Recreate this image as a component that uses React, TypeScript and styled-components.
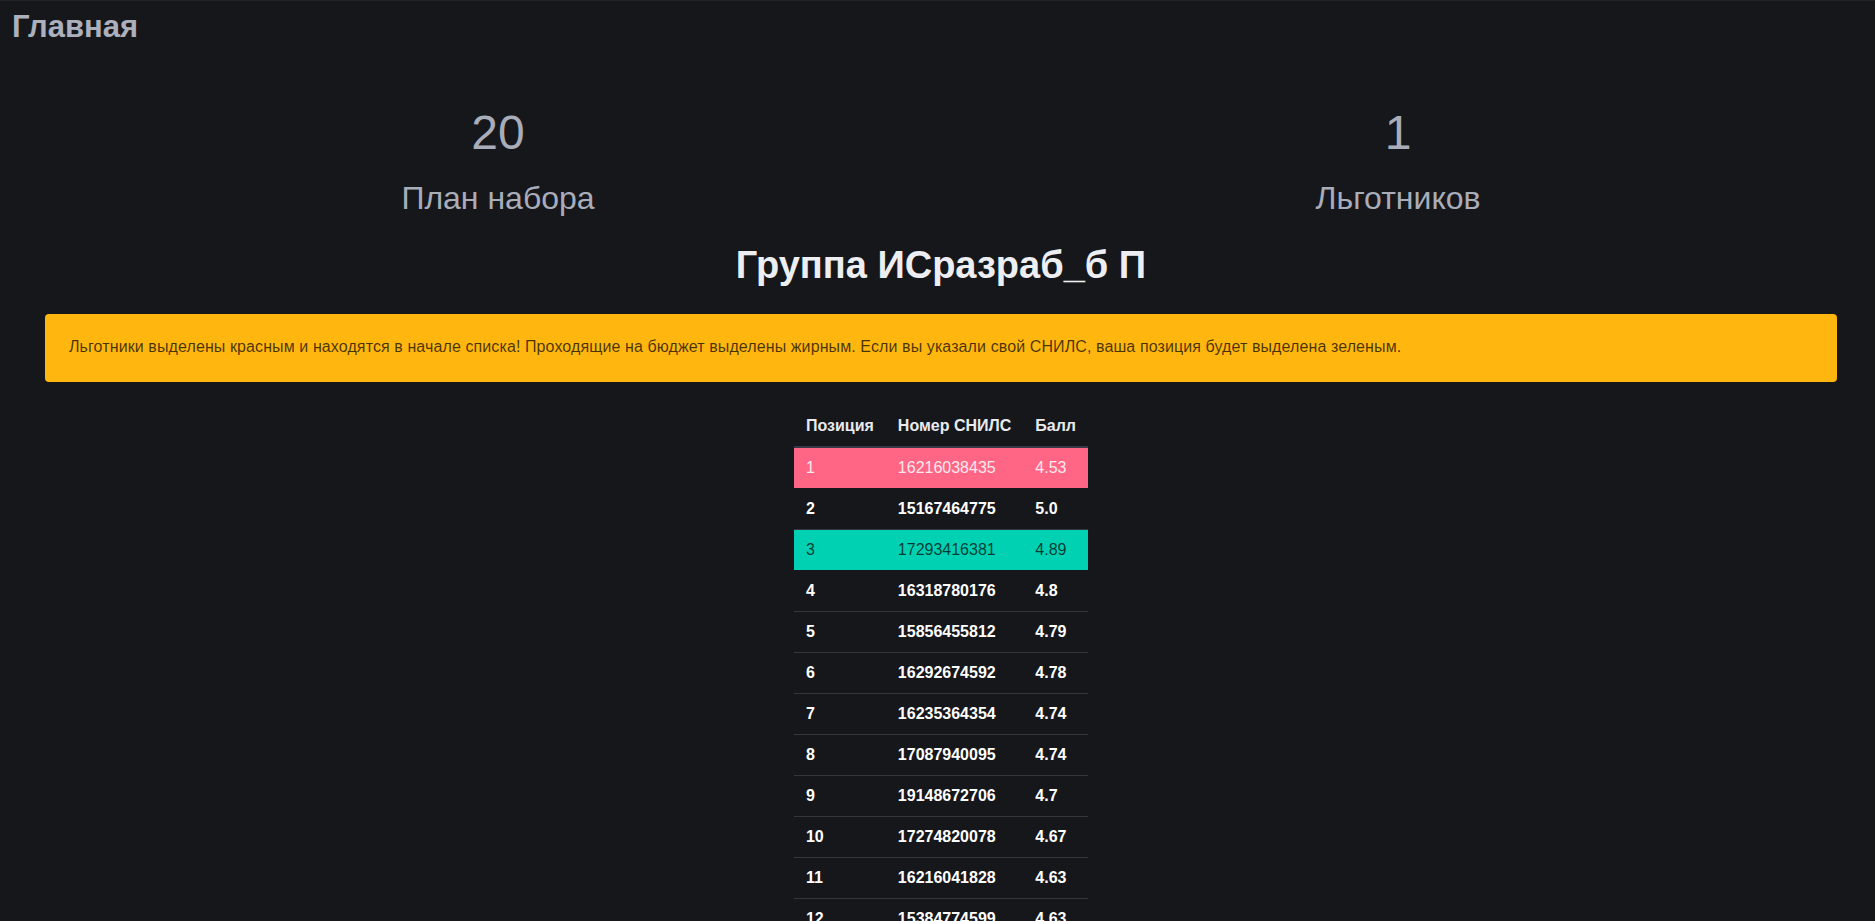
import styled, { createGlobalStyle } from 'styled-components'

type Kind = 'benefit' | 'mine' | 'pass'

interface Row {
  pos: number
  snils: string
  score: string
  kind: Kind
}

const rows: Row[] = [
  { pos: 1, snils: '16216038435', score: '4.53', kind: 'benefit' },
  { pos: 2, snils: '15167464775', score: '5.0', kind: 'pass' },
  { pos: 3, snils: '17293416381', score: '4.89', kind: 'mine' },
  { pos: 4, snils: '16318780176', score: '4.8', kind: 'pass' },
  { pos: 5, snils: '15856455812', score: '4.79', kind: 'pass' },
  { pos: 6, snils: '16292674592', score: '4.78', kind: 'pass' },
  { pos: 7, snils: '16235364354', score: '4.74', kind: 'pass' },
  { pos: 8, snils: '17087940095', score: '4.74', kind: 'pass' },
  { pos: 9, snils: '19148672706', score: '4.7', kind: 'pass' },
  { pos: 10, snils: '17274820078', score: '4.67', kind: 'pass' },
  { pos: 11, snils: '16216041828', score: '4.63', kind: 'pass' },
  { pos: 12, snils: '15384774599', score: '4.63', kind: 'pass' },
]

export default function App() {
  return (
    <>
      <GlobalStyle />
      <Page>
        <Header>Главная</Header>
        <Content>
          <Stats>
            <Stat>
              <StatValue>20</StatValue>
              <StatLabel>План набора</StatLabel>
            </Stat>
            <Stat>
              <StatValue>1</StatValue>
              <StatLabel>Льготников</StatLabel>
            </Stat>
          </Stats>
          <GroupTitle>Группа ИСразраб_б П</GroupTitle>
          <Notice>
            Льготники выделены красным и находятся в начале списка! Проходящие на бюджет
            выделены жирным. Если вы указали свой СНИЛС, ваша позиция будет выделена зеленым.
          </Notice>
          <Table>
            <thead>
              <tr>
                <Th>Позиция</Th>
                <Th>Номер СНИЛС</Th>
                <Th>Балл</Th>
              </tr>
            </thead>
            <tbody>
              {rows.map((r) => (
                <Tr key={r.pos} $kind={r.kind}>
                  <Td>{r.pos}</Td>
                  <Td>{r.snils}</Td>
                  <Td>{r.score}</Td>
                </Tr>
              ))}
            </tbody>
          </Table>
        </Content>
      </Page>
    </>
  )
}

const GlobalStyle = createGlobalStyle`
  html {
    background: #16171b;
    scrollbar-width: none;
  }
  body {
    margin: 0;
    background: #16171b;
    font-family: "Liberation Sans", Arial, sans-serif;
    font-size: 16px;
    color: #c9ccd4;
  }
`

const Page = styled.div`
  border-top: 1px solid #222328;
  min-height: 920px;
`

const Header = styled.h1`
  margin: 0;
  padding: 8px 12px 0;
  font-size: 31px;
  font-weight: 700;
  line-height: normal;
  color: #acb0bc;
`

const Content = styled.main`
  padding: 0 38px 0 45px;
`

const Stats = styled.div`
  display: grid;
  grid-template-columns: 1fr 1fr;
  margin: 61px -11px 0 3px;
`

const Stat = styled.div`
  display: flex;
  flex-direction: column;
  align-items: center;
`

const StatValue = styled.p`
  margin: 0;
  font-size: 48px;
  line-height: 54px;
  color: #a9adba;
`

const StatLabel = styled.p`
  margin: 18px 0 0;
  font-size: 32px;
  line-height: 40px;
  color: #a9adba;
`

const GroupTitle = styled.h2`
  margin: 27px 0 0;
  text-align: center;
  font-size: 38px;
  font-weight: 700;
  line-height: 40px;
  color: #eceef2;
`

const Notice = styled.div`
  margin: 29px 0 24px;
  padding: 21px 40px 23px 24px;
  border-radius: 4px;
  background: #ffb70f;
  color: rgba(0, 0, 0, 0.72);
  line-height: 24px;
  letter-spacing: 0.1px;
`

const Table = styled.table`
  margin: 0 auto;
  border-collapse: collapse;
  border-spacing: 0;
  background: #16171b;
`

const Th = styled.th`
  padding: 8px 12px;
  text-align: left;
  font-weight: 700;
  line-height: 24px;
  color: #e8eaef;
  border-bottom: 2px solid #363944;
`

const Td = styled.td`
  padding: 8px 12px;
  line-height: 24px;
  border-bottom: 1px solid #34363d;
`

const Tr = styled.tr<{ $kind: Kind }>`
  background: ${(p) =>
    p.$kind === 'benefit' ? '#ff6685' : p.$kind === 'mine' ? '#00d1b2' : 'transparent'};
  color: ${(p) =>
    p.$kind === 'benefit' ? '#fde9ee' : p.$kind === 'mine' ? 'rgba(0, 0, 0, 0.72)' : '#ffffff'};
  font-weight: ${(p) => (p.$kind === 'pass' ? 700 : 400)};

  & > td {
    border-bottom-color: ${(p) => (p.$kind === 'pass' ? '#34363d' : '#16171b')};
  }
`
